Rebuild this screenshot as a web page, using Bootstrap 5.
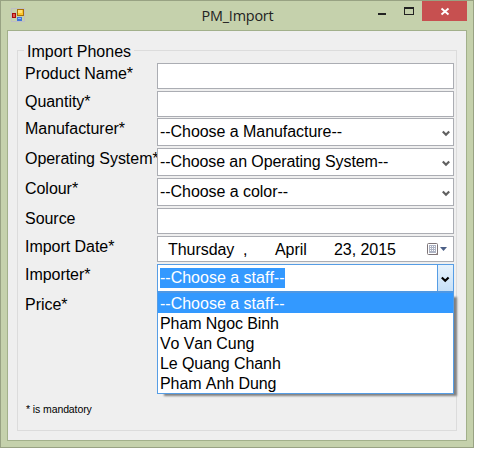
<!DOCTYPE html>
<html lang="en">
<head>
<meta charset="utf-8">
<title>PM_Import</title>
<link href="https://cdn.jsdelivr.net/npm/bootstrap@5.3.0/dist/css/bootstrap.min.css" rel="stylesheet">
<style>
body{background:#fff;font-family:"Liberation Sans",Arial,sans-serif;font-size:16px;line-height:20px;color:#000;overflow:hidden;font-kerning:none}
svg{display:block;flex:none}
.win{width:474px;height:448px;background:#c5d1ac;border:1px solid #98a283;padding:0 6px 6px}
.titlebar{height:29px}
.titlebar .caption{font-family:"Open Sans","Noto Sans",sans-serif;font-size:14.4px;line-height:29px;color:#222;letter-spacing:-.2px;padding-left:1px}
.app-icon{margin:7px 0 0 4px}
.win-btns{top:0;right:0}
.btn-close-win{width:45px;height:20px;background:#c75050}
.client{height:411px;background:#efefef;border:1px solid #a2b08b;padding:19px 9px 9px}
.group{width:440px;height:381px;border:1px solid #dcdcdc;padding:0 2px 0 7px}
.group-title{height:20px;margin:-9px 0 0 -1px;width:110px;background:#efefef;padding-left:3px;white-space:nowrap}
.fields{display:grid;grid-template-columns:132px 297px;grid-template-rows:28px 27px 30px 30px 30px 28px 28px 30px;margin-top:1px}
.fields label{white-space:nowrap;height:20px;padding-top:1px;letter-spacing:-.04px}
.box{height:26px;border:1px solid #abadb3;border-radius:0;background:#fff;padding:0 0 0 2px;line-height:26px;white-space:nowrap;letter-spacing:-.05px}
.box.combo{height:28px}
.box.combo svg{margin:2px 3px 0 auto}
.box.combo.long{letter-spacing:-.1px}
.box.date{line-height:25px;padding-left:10px}
.box.open{border-color:#569de5;letter-spacing:0}
.sel{background:#3399ff;color:#fff;height:20px;line-height:20px;width:125px;margin-top:-1px}
.drop-btn{width:16px;border-left:1px solid #569de5;background:linear-gradient(#e6f2fc,#c6e0f8)}
.drop-btn svg{margin:2px 0 0 3px!important}
.options{top:27px;left:0;width:297px;height:103px;border:1px solid #569de5;border-top:2px solid #4f98e3;background:#fff;box-shadow:5px 4px 2px -2px #808080;z-index:5}
.options li{height:20px;line-height:22px;padding-left:2px;white-space:nowrap;letter-spacing:-.08px}
.options li.active{background:#3399ff;color:#fff;letter-spacing:0}
.d-day{width:75px}.d-month{width:59px}.d-sep{width:32px}
.note{font-size:10.5px;line-height:14px;letter-spacing:-.1px;white-space:nowrap;padding:88px 0 0 1px}
</style>
<script src="https://cdn.jsdelivr.net/npm/bootstrap@5.3.0/dist/js/bootstrap.bundle.min.js"></script>
</head>
<body>
<div class="win">
  <header class="titlebar position-relative d-flex">
    <svg class="app-icon" width="14" height="14" shape-rendering="crispEdges">
      <path d="M.5 .5h13v13H.5z" fill="none" stroke="#bfbfc5"/>
      <rect x="6" y="1" width="7" height="7" fill="#a87008"/><rect x="7" y="2" width="5" height="5" fill="#fbc62c"/>
      <rect x="7" y="2" width="4" height="3" fill="#ffe070"/>
      <rect x="1" y="5" width="4" height="5" fill="#a80c0c"/><rect x="2" y="6" width="2" height="3" fill="#e05a50"/>
      <rect x="6" y="9" width="5" height="4" fill="#3f75da"/><rect x="7" y="10" width="3" height="1" fill="#8ab8ff"/>
    </svg>
    <div class="caption position-absolute w-100 text-center">PM_Import</div>
    <div class="win-btns position-absolute d-flex">
      <svg width="44" height="20" shape-rendering="crispEdges"><rect y="12" width="8" height="2" fill="#222"/><path d="M26 6h10v8H26zM27 8v5h8V8z" fill="#222" fill-rule="evenodd"/></svg>
      <div class="btn-close-win"><svg width="45" height="20"><path d="M19.500 7.500l7 6M26.500 7.500l-7 6" stroke="#fff" stroke-width="1.9"/></svg></div>
    </div>
  </header>
  <main class="client">
    <section class="group">
      <div class="group-title">Import Phones</div>
      <div class="fields">
        <label>Product Name*</label><div class="box"></div>
        <label>Quantity*</label><div class="box"></div>
        <label>Manufacturer*</label>
        <div class="box combo d-flex align-items-center">--Choose a Manufacture--<svg width="8" height="7"><path d="M.8 1.500l3.200 3.200 3.200-3.200" fill="none" stroke="#606060" stroke-width="2.2"/></svg></div>
        <label>Operating System*</label>
        <div class="box combo long d-flex align-items-center">--Choose an Operating System--<svg width="8" height="7"><path d="M.8 1.500l3.200 3.200 3.200-3.200" fill="none" stroke="#606060" stroke-width="2.2"/></svg></div>
        <label>Colour*</label>
        <div class="box combo d-flex align-items-center">--Choose a color--<svg width="8" height="7"><path d="M.8 1.500l3.200 3.200 3.200-3.200" fill="none" stroke="#606060" stroke-width="2.2"/></svg></div>
        <label>Source</label><div class="box"></div>
        <label>Import Date*</label>
        <div class="box date d-flex">
          <span class="d-day">Thursday</span><span class="d-sep">,</span><span class="d-month">April</span><span>23, 2015</span>
          <svg class="ms-auto me-1" width="22" height="24">
            <rect x=".5" y="6.500" width="10" height="11" rx="1" fill="#fff" stroke="#7d7477"/>
            <rect x="2" y="8" width="7" height="8" fill="#aeb4c4"/>
            <path d="M3 9h1v1H3zM5 9h1v1H5zM7 9h1v1H7zM3 11h1v1H3zM5 11h1v1H5zM7 11h1v1H7zM3 13h1v1H3zM5 13h1v1H5zM7 13h1v1H7z" fill="#fff"/>
            <path d="M8 18l3-3v3z" fill="#85797a"/><path d="M13 10h7l-3.500 4z" fill="#4b5f86"/>
          </svg>
        </div>
        <label>Importer*</label>
        <div class="position-relative">
          <div class="box combo open d-flex align-items-center"><span class="sel">--Choose a staff--</span>
            <div class="drop-btn ms-auto h-100 d-flex align-items-center"><svg width="9" height="7"><path d="M.8 1.500l3.400 3.200 3.400-3.200" fill="none" stroke="#000" stroke-width="2.2"/></svg></div>
          </div>
          <ul class="options list-unstyled position-absolute m-0">
            <li class="active">--Choose a staff--</li><li>Pham Ngoc Binh</li><li>Vo Van Cung</li><li>Le Quang Chanh</li><li>Pham Anh Dung</li>
          </ul>
        </div>
        <label>Price*</label>
      </div>
      <div class="note">* is mandatory</div>
    </section>
  </main>
</div>
</body>
</html>
